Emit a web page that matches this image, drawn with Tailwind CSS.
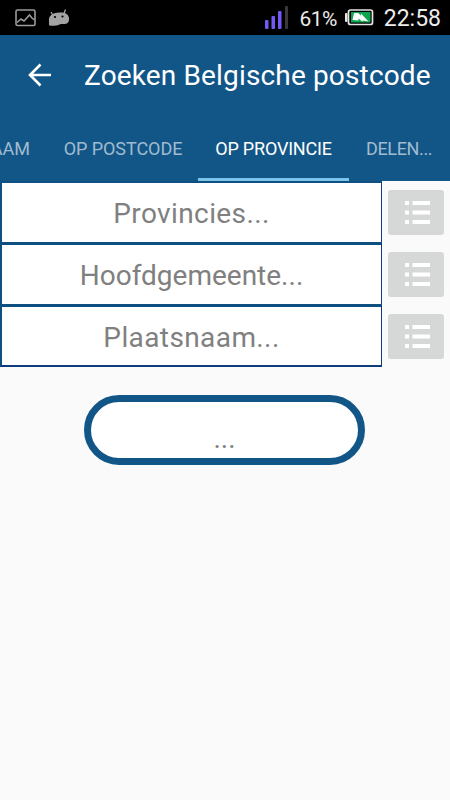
<!DOCTYPE html>
<html lang="nl">
<head>
  <meta charset="UTF-8" />
  <meta name="viewport" content="width=device-width, initial-scale=1.0"/>
  <title>Zoeken Belgische postcode</title>
  <script src="https://cdn.jsdelivr.net/npm/@tailwindcss/browser@4"></script>
</head>
<body class="bg-[#fafafa] font-[Roboto,sans-serif] h-screen overflow-hidden">
  <!-- Statusbalk -->
  <div class="bg-black h-[35px] flex items-center justify-between pl-[15px] pr-[9px]">
    <div class="flex items-center gap-[13px]">
      <svg class="w-[21px] h-[18px]" viewBox="0 0 21 18" fill="none" stroke="#9b9b9b" stroke-width="1.6">
        <rect x="1" y="1" width="19" height="15.5" rx="1.5"/>
        <path d="M2 13.500L6 10l3 2 5.500-6L17 9l2.500 2"/>
      </svg>
      <svg class="w-[21px] h-[18px]" viewBox="0 0 21 18">
        <path d="M2 3l2 3.500M16.500 .5l-1.500 4" stroke="#a3a3a3" stroke-width="1.300"/>
        <path d="M0 16V9.500C1 5.500 5 3.700 10 3.500c6-.3 9.500 1.500 10 5.500.3 4-1 5.500-4 6-2 .2-4-.3-6 .8-3 1.200-8 1.500-10 .2z" fill="#a3a3a3"/>
        <circle cx="6" cy="8" r="1.100" fill="#000"/>
        <circle cx="13.500" cy="7.500" r="1.100" fill="#000"/>
      </svg>
    </div>
    <div class="flex items-center text-[#ececec]">
      <svg class="w-[23px] h-[23px] mr-[12px]" viewBox="0 0 23 23" fill="#7559f5">
        <rect x="0" y="14" width="3.500" height="9" rx="1"/>
        <rect x="6.500" y="10" width="3.500" height="13" rx="1"/>
        <rect x="13" y="5" width="3.500" height="18" rx="1"/>
        <rect x="20" y="0" width="3" height="23" rx="1" fill="#393939"/>
      </svg>
      <span class="text-[21px] tracking-[-0.6px] leading-6 mt-[3px] mr-[8px]">61%</span>
      <svg class="w-[29px] h-[17px] mr-[10px] -mt-px" viewBox="0 0 29 17">
        <rect x="0" y="4" width="2.500" height="9" rx="1" fill="#e4e4e4"/>
        <rect x="3.500" y="1" width="24" height="14.500" rx="2" fill="#000" stroke="#e4e4e4" stroke-width="1.700"/>
        <rect x="6" y="3" width="19.500" height="10.500" fill="#0da64d"/>
        <path d="M9 4h4l3 2.500V4.500l7.500 8-6-1v1.200l-4-3.200v2L7.500 11z" fill="#fff"/>
      </svg>
      <span class="text-[23px] leading-6 mt-[3px]">22:58</span>
    </div>
  </div>

  <!-- Titel en tabbladen -->
  <header class="bg-[#125688] h-[146px]">
    <div class="h-[80px] flex items-center pl-[28px]">
      <svg class="w-[24px] h-[24px]" viewBox="0 0 24 24" fill="none" stroke="#fff" stroke-width="2.600">
        <path d="M23 12H2.500M12.500 1.500L2 12l10.500 10.500"/>
      </svg>
      <h1 class="text-[28px] tracking-[0.15px] text-white ml-[32px] mt-[2px] whitespace-nowrap">Zoeken Belgische postcode</h1>
    </div>
    <nav class="h-[66px] flex text-[18px] leading-[67px] text-[#a0bbcf] whitespace-nowrap">
      <a class="w-[47px] flex justify-end pr-[17px] overflow-hidden">AAM</a>
      <a class="w-[151px] text-center tracking-[-0.05px] pl-px">OP POSTCODE</a>
      <a class="w-[151px] text-center tracking-[-0.2px] text-white border-b-3 border-[#7cc4ea]">OP PROVINCIE</a>
      <a class="w-[100px] pl-[17px] tracking-[-0.35px]">DELEN...</a>
    </nav>
  </header>

  <main>
    <div class="flex h-[62px]">
      <div class="w-[382px] border-2 border-b border-r-[1.500px] border-[#0f5083] border-r-[#0d3c7c] bg-white text-[#808080] text-[28px] tracking-[0.4px] pt-[2px] flex items-center justify-center">Provincies...</div>
      <button class="w-[56px] h-[45px] ml-[6px] mt-[9px] rounded-[3px] bg-[#d6d8d7] flex items-center justify-center">
        <svg class="w-[25px] h-[23px] ml-[2px]" viewBox="0 0 25 23" fill="#fff"><path d="M0 0h4v4H0zM7.500 0H25v4H7.500zM0 9.500h4v4H0zM7.500 9.500H25v4H7.500zM0 19h4v4H0zM7.500 19H25v4H7.500z"/></svg>
      </button>
    </div>
    <div class="flex h-[62px]">
      <div class="w-[382px] border-2 border-b border-r-[1.500px] border-[#0f5083] border-r-[#0d3c7c] bg-white text-[#808080] text-[28px] pt-[2px] flex items-center justify-center">Hoofdgemeente...</div>
      <button class="w-[56px] h-[45px] ml-[6px] mt-[9px] rounded-[3px] bg-[#d6d8d7] flex items-center justify-center">
        <svg class="w-[25px] h-[23px] ml-[2px]" viewBox="0 0 25 23" fill="#fff"><path d="M0 0h4v4H0zM7.500 0H25v4H7.500zM0 9.500h4v4H0zM7.500 9.500H25v4H7.500zM0 19h4v4H0zM7.500 19H25v4H7.500z"/></svg>
      </button>
    </div>
    <div class="flex h-[62px]">
      <div class="w-[382px] border-2 border-r-[1.500px] border-[#0f5083] border-r-[#0d3c7c] border-b-[#0d3c7c] bg-white text-[#808080] text-[28px] tracking-[0.4px] pt-[3px] flex items-center justify-center">Plaatsnaam...</div>
      <button class="w-[56px] h-[45px] ml-[6px] mt-[9px] rounded-[3px] bg-[#d6d8d7] flex items-center justify-center">
        <svg class="w-[25px] h-[23px] ml-[2px]" viewBox="0 0 25 23" fill="#fff"><path d="M0 0h4v4H0zM7.500 0H25v4H7.500zM0 9.500h4v4H0zM7.500 9.500H25v4H7.500zM0 19h4v4H0zM7.500 19H25v4H7.500z"/></svg>
      </button>
    </div>

    <!-- Resultaat -->
    <div class="w-[281px] h-[70px] mt-[28px] ml-[84px] rounded-full border-7 border-[#125688] bg-white text-[#808080] text-[28px] leading-7 flex items-end justify-center pb-[5px]">...</div>
  </main>
</body>
</html>
